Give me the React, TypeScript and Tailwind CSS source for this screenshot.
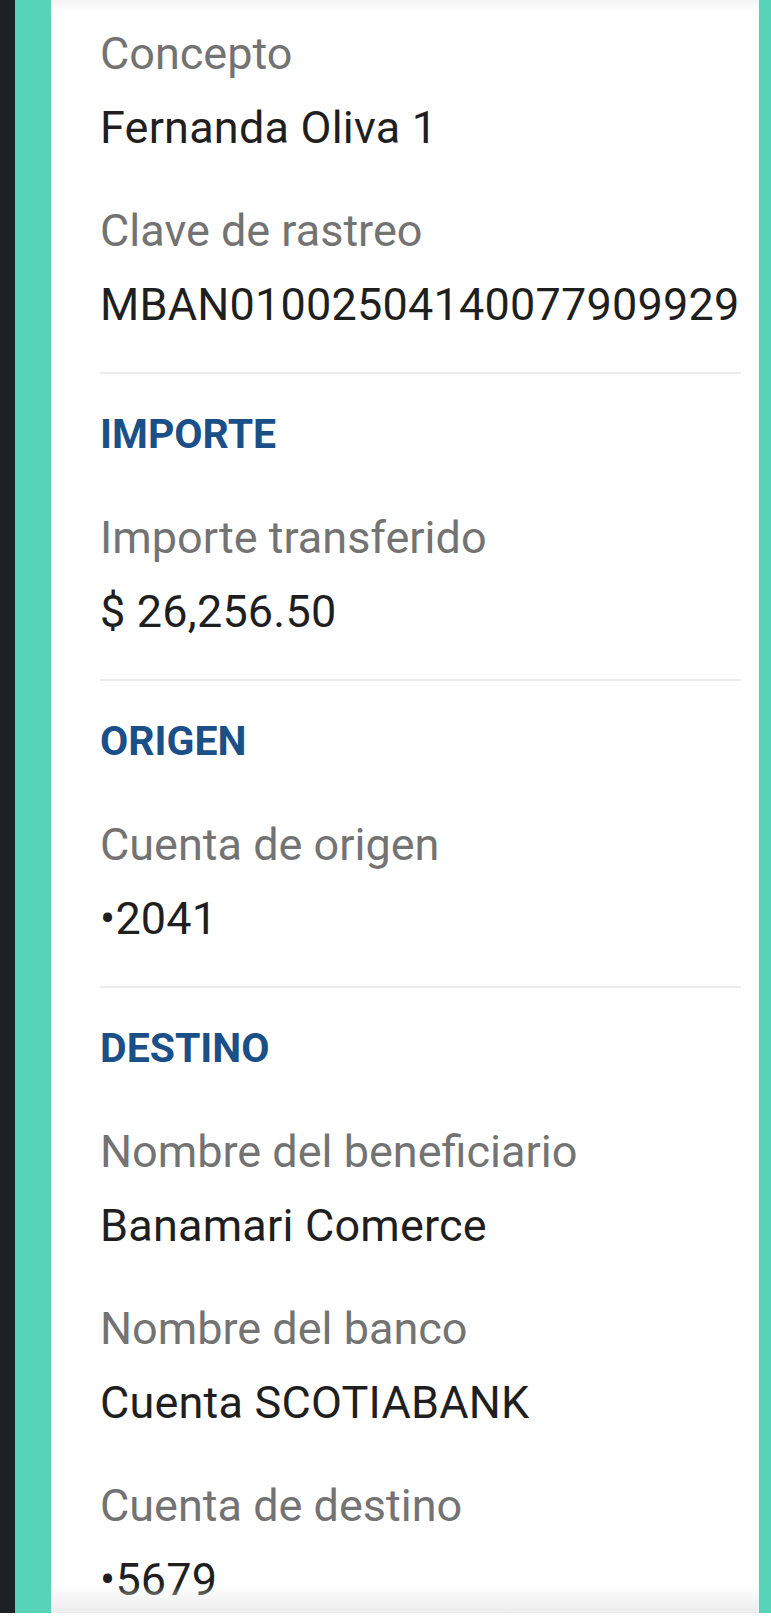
const sections: { title?: string; fields: { label: string; value: string }[] }[] = [
  {
    fields: [
      { label: 'Concepto', value: 'Fernanda Oliva 1' },
      { label: 'Clave de rastreo', value: 'MBAN01002504140077909929' },
    ],
  },
  {
    title: 'IMPORTE',
    fields: [{ label: 'Importe transferido', value: '$ 26,256.50' }],
  },
  {
    title: 'ORIGEN',
    fields: [{ label: 'Cuenta de origen', value: '•2041' }],
  },
  {
    title: 'DESTINO',
    fields: [
      { label: 'Nombre del beneficiario', value: 'Banamari Comerce' },
      { label: 'Nombre del banco', value: 'Cuenta SCOTIABANK' },
      { label: 'Cuenta de destino', value: '•5679' },
    ],
  },
]

function Field({ label, value }: { label: string; value: string }) {
  return (
    <div className="flex flex-col">
      <span className="text-[45px] leading-[52px] text-[#737373]">{label}</span>
      <span className="mt-[22px] text-[45px] leading-[52px] tracking-[0.2px] text-[#1f1f1f]">
        {value}
      </span>
    </div>
  )
}

export default function App() {
  return (
    <div
      className="flex h-[1618px] w-[771px] flex-col overflow-hidden bg-white"
      style={{ fontFamily: 'Roboto, "Liberation Sans", sans-serif' }}
    >
      <div className="flex h-[1613px] w-full">
        <div className="w-[15px] bg-[#1f2024]" />
        <div className="w-[36px] bg-[#57d3b9]" />

        <main className="relative flex-1 overflow-hidden bg-white pl-[49px] pr-[18px] pt-[28px]">
          <div className="pointer-events-none absolute inset-x-0 top-0 h-[12px] bg-gradient-to-b from-[#f4f4f4] to-white" />
          <div className="pointer-events-none absolute inset-x-0 bottom-0 h-[28px] bg-gradient-to-b from-white/0 to-[#ececec]" />

          {sections.map((s, i) => (
            <section key={i}>
              {i > 0 && <div className="mt-[41px] h-[2px] bg-[#ebebeb]" />}
              {s.title && (
                <h2 className="mt-[34px] text-[41px] font-bold leading-[52px] text-[#1b4f87]">
                  {s.title}
                </h2>
              )}
              <div className={`flex flex-col gap-[51px] ${s.title ? 'mt-[52px]' : ''}`}>
                {s.fields.map((f) => (
                  <Field key={f.label} label={f.label} value={f.value} />
                ))}
              </div>
            </section>
          ))}
        </main>

        <div className="w-[12px] bg-[#57d3b9]" />
      </div>
    </div>
  )
}
